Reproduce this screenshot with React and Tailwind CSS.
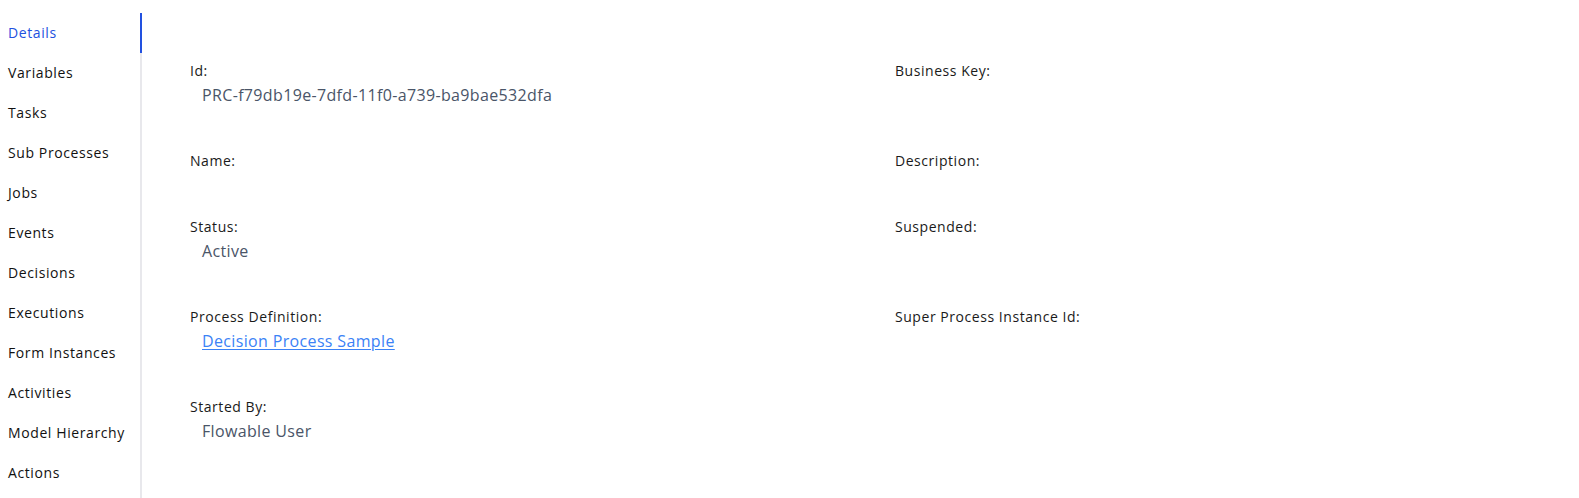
import React from 'react';

const tabs = [
    'Details',
    'Variables',
    'Tasks',
    'Sub Processes',
    'Jobs',
    'Events',
    'Decisions',
    'Executions',
    'Form Instances',
    'Activities',
    'Model Hierarchy',
    'Actions',
];

const rows = [
    [{ label: 'Id:', value: 'PRC-f79db19e-7dfd-11f0-a739-ba9bae532dfa' }, { label: 'Business Key:' }],
    [{ label: 'Name:' }, { label: 'Description:' }],
    [{ label: 'Status:', value: 'Active' }, { label: 'Suspended:' }],
    [{ label: 'Process Definition:', value: 'Decision Process Sample', link: true }, { label: 'Super Process Instance Id:' }],
    [{ label: 'Started By:', value: 'Flowable User' }, null],
];

const Field = ({ field }) => {
    if (!field) return <div />;
    return (
        <div className="pb-[46px]">
            <div className="text-[14px] leading-[20px] tracking-[0.55px] text-[#1a1a1a]">{field.label}</div>
            {field.value && (
                <div className="pl-3 pt-[2px] -mb-[2px] text-[16px] leading-[24px] tracking-[0.35px]">
                    {field.link ? (
                        <a href="#" className="text-[#3b82f6] underline underline-offset-2">{field.value}</a>
                    ) : (
                        <span className="text-[#4a5568]">{field.value}</span>
                    )}
                </div>
            )}
        </div>
    );
};

const App = () => {
    return (
        <div className="flex min-h-[498px] bg-white pt-[13px] font-['Open_Sans',sans-serif]">
            {/* Sidebar */}
            <nav className="w-[142px] shrink-0 border-r-2 border-[#e8e8ec]">
                {tabs.map((tab, i) => (
                    <div
                        key={tab}
                        className={
                            i === 0
                                ? 'h-[40px] flex items-center pl-2 pb-[2px] text-[14px] tracking-[0.6px] text-[#2251e0] -mr-[2px] border-r-2 border-[#2251e0]'
                                : 'h-[40px] flex items-center pl-2 pb-[2px] text-[14px] tracking-[0.6px] text-[#111]'
                        }
                    >
                        {tab}
                    </div>
                ))}
            </nav>

            {/* Content */}
            <main className="flex-1 pl-[48px] pt-[48px]">
                {rows.map((row, i) => (
                    <div key={i} className="grid grid-cols-[705px_1fr]">
                        <Field field={row[0]} />
                        <Field field={row[1]} />
                    </div>
                ))}
            </main>
        </div>
    );
};

export default App;
